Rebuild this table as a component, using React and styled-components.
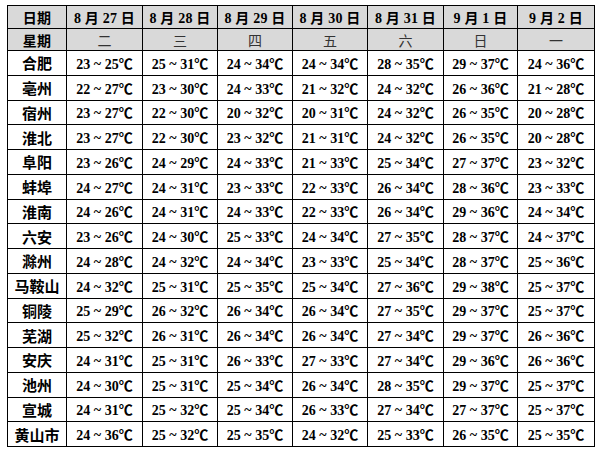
import React from 'react';
import styled, { createGlobalStyle } from 'styled-components';

const GlobalStyle = createGlobalStyle`
    html, body {
        margin: 0;
        padding: 0;
        background: #fff;
    }
    body {
        padding: 5px 0 0 7px;
        font-family: "Liberation Serif", "Noto Sans CJK SC", serif;
        color: #000;
    }
`;

const Table = styled.table`
    border-collapse: collapse;
    table-layout: fixed;
    width: 587px;
    border: 1.5px solid #000;
`;

const Col = styled.col`
    width: ${(p) => p.$w}px;
`;

const Row = styled.tr`
    height: ${(p) => p.$h}px;
`;

const HeadCell = styled.th`
    background: #d9d9d9;
    border: 1px solid #000;
    padding: 0;
    text-align: center;
    vertical-align: middle;
    font-size: 14px;
    font-weight: ${(p) => (p.$light ? 400 : 700)};
    color: ${(p) => (p.$light ? '#333' : '#000')};
    white-space: nowrap;
    letter-spacing: ${(p) => (p.$light ? '0' : '0.2px')};
`;

const CityCell = styled.td`
    border: 1px solid #000;
    padding: 0;
    text-align: center;
    vertical-align: middle;
    font-size: 15px;
    font-weight: 700;
    white-space: nowrap;
`;

const TempCell = styled.td`
    border: 1px solid #000;
    padding: 0;
    text-align: center;
    vertical-align: middle;
    font-size: 14px;
    font-weight: 700;
    white-space: nowrap;
`;

const dates = [
    '8 月 27 日',
    '8 月 28 日',
    '8 月 29 日',
    '8 月 30 日',
    '8 月 31 日',
    '9 月 1 日',
    '9 月 2 日',
];

const weekdays = ['二', '三', '四', '五', '六', '日', '一'];

const rows = [
    ['合肥', '23 ~ 25', '25 ~ 31', '24 ~ 34', '24 ~ 34', '28 ~ 35', '29 ~ 37', '24 ~ 36'],
    ['亳州', '22 ~ 27', '23 ~ 30', '24 ~ 33', '21 ~ 32', '24 ~ 32', '26 ~ 36', '21 ~ 28'],
    ['宿州', '23 ~ 27', '22 ~ 30', '20 ~ 32', '20 ~ 31', '24 ~ 32', '26 ~ 35', '20 ~ 28'],
    ['淮北', '23 ~ 27', '22 ~ 30', '23 ~ 32', '21 ~ 31', '24 ~ 32', '26 ~ 35', '20 ~ 28'],
    ['阜阳', '23 ~ 26', '24 ~ 29', '24 ~ 33', '21 ~ 33', '25 ~ 34', '27 ~ 37', '23 ~ 32'],
    ['蚌埠', '24 ~ 27', '24 ~ 31', '23 ~ 33', '22 ~ 33', '26 ~ 34', '28 ~ 36', '23 ~ 33'],
    ['淮南', '24 ~ 26', '24 ~ 31', '24 ~ 33', '22 ~ 33', '26 ~ 34', '29 ~ 36', '24 ~ 34'],
    ['六安', '23 ~ 26', '24 ~ 30', '25 ~ 33', '24 ~ 34', '27 ~ 35', '28 ~ 37', '24 ~ 37'],
    ['滁州', '24 ~ 28', '24 ~ 32', '24 ~ 34', '23 ~ 33', '25 ~ 34', '28 ~ 37', '25 ~ 36'],
    ['马鞍山', '24 ~ 32', '25 ~ 31', '25 ~ 35', '25 ~ 34', '27 ~ 36', '29 ~ 38', '25 ~ 37'],
    ['铜陵', '25 ~ 29', '26 ~ 32', '26 ~ 34', '26 ~ 34', '27 ~ 35', '29 ~ 37', '25 ~ 37'],
    ['芜湖', '25 ~ 32', '26 ~ 31', '26 ~ 34', '26 ~ 34', '27 ~ 34', '29 ~ 37', '26 ~ 36'],
    ['安庆', '24 ~ 31', '25 ~ 31', '26 ~ 33', '27 ~ 33', '27 ~ 34', '29 ~ 36', '26 ~ 36'],
    ['池州', '24 ~ 30', '25 ~ 31', '25 ~ 34', '26 ~ 34', '28 ~ 35', '29 ~ 37', '25 ~ 37'],
    ['宣城', '24 ~ 31', '25 ~ 32', '25 ~ 34', '26 ~ 33', '27 ~ 34', '27 ~ 37', '25 ~ 37'],
    ['黄山市', '24 ~ 36', '25 ~ 32', '25 ~ 35', '24 ~ 32', '25 ~ 33', '26 ~ 35', '25 ~ 35'],
];

const App = () => {
    return (
        <>
            <GlobalStyle />
            <Table>
                <colgroup>
                    <Col $w={59} />
                    <Col $w={76} />
                    <Col $w={75} />
                    <Col $w={75} />
                    <Col $w={75} />
                    <Col $w={76} />
                    <Col $w={74} />
                    <Col $w={77} />
                </colgroup>
                <thead>
                    <Row $h={23}>
                        <HeadCell>日期</HeadCell>
                        {dates.map((d) => (
                            <HeadCell key={d}>{d}</HeadCell>
                        ))}
                    </Row>
                    <Row $h={22}>
                        <HeadCell>星期</HeadCell>
                        {weekdays.map((w) => (
                            <HeadCell key={w} $light>{w}</HeadCell>
                        ))}
                    </Row>
                </thead>
                <tbody>
                    {rows.map(([city, ...temps]) => (
                        <Row key={city} $h={24.75}>
                            <CityCell>{city}</CityCell>
                            {temps.map((t, i) => (
                                <TempCell key={i}>{t}℃</TempCell>
                            ))}
                        </Row>
                    ))}
                </tbody>
            </Table>
        </>
    );
};

export default App;
